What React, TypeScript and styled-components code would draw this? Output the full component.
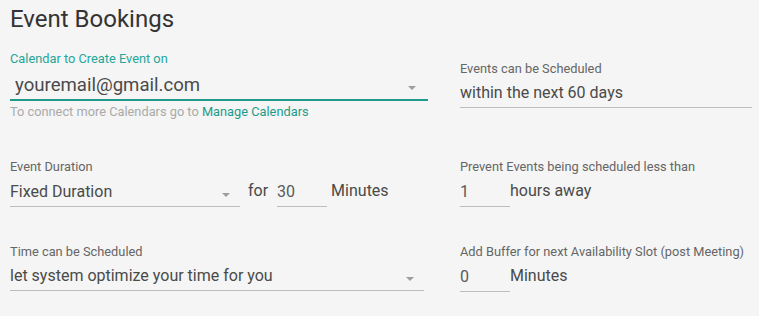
import styled, { createGlobalStyle } from 'styled-components'

const GlobalStyle = createGlobalStyle`
  html, body {
    margin: 0;
    padding: 0;
    background: #f4f5f4;
  }
  body {
    font-family: Roboto, "Liberation Sans", Arial, sans-serif;
    color: #4a4a4a;
  }
`

const TEAL = '#26a69a'

const Page = styled.div({
  width: '759px',
  height: '316px',
  boxSizing: 'border-box',
  padding: '4px 7px 0 10px',
  overflow: 'hidden'
})

const Title = styled.h1({
  margin: 0,
  fontSize: '24px',
  lineHeight: '30px',
  fontWeight: 400,
  color: '#333'
})

type RowProps = { $top: number }
const Row = styled.div<RowProps>(({ $top }) => ({
  display: 'grid',
  gridTemplateColumns: '450px 292px',
  marginTop: `${$top}px`
}))

type FieldProps = { $pad?: number }
const Field = styled.div<FieldProps>(({ $pad }) => ({
  display: 'flex',
  flexDirection: 'column',
  paddingTop: `${$pad ?? 0}px`
}))

type LabelProps = { $active?: boolean }
const Label = styled.div<LabelProps>(({ $active }) => ({
  fontSize: '12.8px',
  lineHeight: '14px',
  color: $active ? TEAL : '#666',
  whiteSpace: 'nowrap'
}))

const Line = styled.div({
  display: 'flex',
  alignItems: 'flex-end'
})

type SelectProps = { $width: number, $active?: boolean }
const Select = styled.div<SelectProps>(({ $width, $active }) => ({
  width: `${$width}px`,
  boxSizing: 'border-box',
  display: 'flex',
  alignItems: 'center',
  justifyContent: 'space-between',
  borderBottom: $active ? `2px solid #1e9b8b` : '1px solid #bdbdbd',
  paddingTop: $active ? '5px' : '2px',
  paddingLeft: $active ? '5px' : 0,
  paddingRight: $active ? '12px' : '10px',
  fontSize: $active ? '18.6px' : '16px',
  lineHeight: $active ? '28px' : '29px',
  color: '#4a4a4a',
  whiteSpace: 'nowrap'
}))

const Arrow = styled.span({
  width: 0,
  height: 0,
  marginTop: '6px',
  borderLeft: '4px solid transparent',
  borderRight: '4px solid transparent',
  borderTop: '4px solid #9e9e9e'
})

type InputProps = { $width: number }
const Input = styled.div<InputProps>(({ $width }) => ({
  width: `${$width}px`,
  boxSizing: 'border-box',
  borderBottom: '1px solid #bdbdbd',
  paddingTop: '3px',
  fontSize: '16px',
  lineHeight: '29px',
  color: '#5a5a5a'
}))

type TextProps = { $left?: number, $right?: number }
const Text = styled.span<TextProps>(({ $left, $right }) => ({
  fontSize: '16px',
  lineHeight: '29px',
  paddingBottom: '2px',
  color: '#4a4a4a',
  marginLeft: `${$left ?? 0}px`,
  marginRight: `${$right ?? 0}px`,
  whiteSpace: 'nowrap'
}))

const Helper = styled.div({
  marginTop: '4px',
  fontSize: '12.8px',
  lineHeight: '14px',
  color: '#aaa'
})

const Link = styled.a({
  color: '#1f9a8a',
  textDecoration: 'none'
})

export default function App() {
  return (<Page>
    <GlobalStyle />
    <Title>Event Bookings</Title>

    <Row $top={18}>
      <Field>
        <Label $active>Calendar to Create Event on</Label>
        <Select $width={418} $active>youremail@gmail.com<Arrow /></Select>
        <Helper>To connect more Calendars go to <Link href="#">Manage Calendars</Link></Helper>
      </Field>
      <Field $pad={10}>
        <Label>Events can be Scheduled</Label>
        <Select $width={292}>within the next 60 days</Select>
      </Field>
    </Row>

    <Row $top={41}>
      <Field>
        <Label>Event Duration</Label>
        <Line>
          <Select $width={230}>Fixed Duration<Arrow /></Select>
          <Text $left={8} $right={9}>for</Text>
          <Input $width={50}>30</Input>
          <Text $left={4}>Minutes</Text>
        </Line>
      </Field>
      <Field>
        <Label>Prevent Events being scheduled less than</Label>
        <Line>
          <Input $width={50}>1</Input>
          <Text>hours away</Text>
        </Line>
      </Field>
    </Row>

    <Row $top={38}>
      <Field>
        <Label>Time can be Scheduled</Label>
        <Select $width={414}>let system optimize your time for you<Arrow /></Select>
      </Field>
      <Field>
        <Label>Add Buffer for next Availability Slot (post Meeting)</Label>
        <Line>
          <Input $width={50}>0</Input>
          <Text>Minutes</Text>
        </Line>
      </Field>
    </Row>
  </Page>)
}
